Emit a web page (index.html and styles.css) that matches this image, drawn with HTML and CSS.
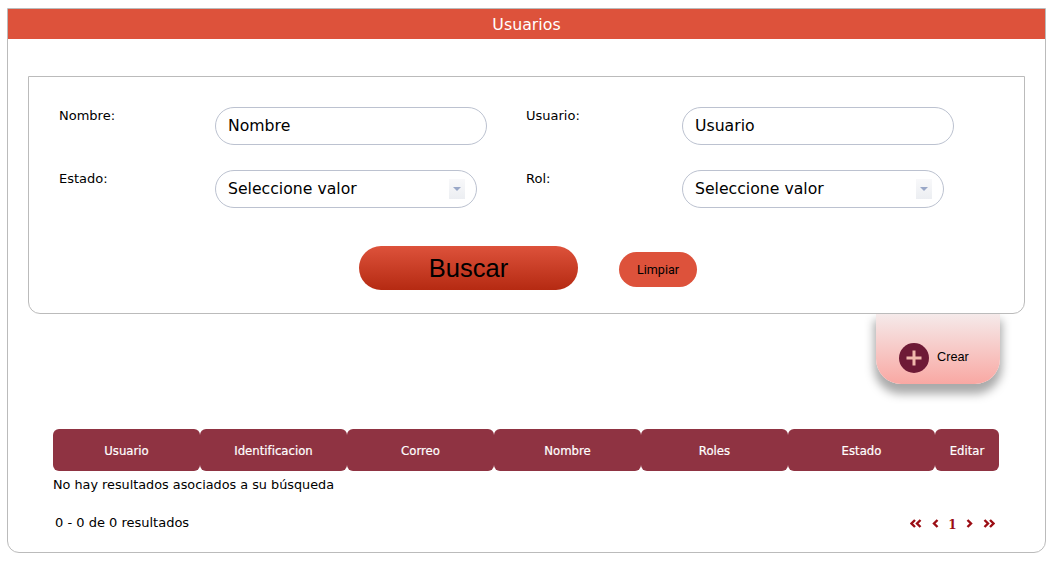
FILE: index.html
```html
<!DOCTYPE html>
<html lang="es">
<head>
<meta charset="utf-8">
<title>Usuarios</title>
<link rel="stylesheet" href="styles.css">
</head>
<body>
<main class="card">
  <h1 class="title">Usuarios</h1>
  <form class="panel">
    <div class="fields">
      <label class="label">Nombre:</label>
      <div class="control"><div class="input">Nombre</div></div>
      <label class="label">Usuario:</label>
      <div class="control"><div class="input">Usuario</div></div>
      <label class="label">Estado:</label>
      <div class="control"><div class="input select">Seleccione valor<span class="arrow"></span></div></div>
      <label class="label">Rol:</label>
      <div class="control"><div class="input select">Seleccione valor<span class="arrow"></span></div></div>
    </div>
    <div class="actions">
      <button type="button" class="btn-search">Buscar</button>
      <button type="button" class="btn-clear">Limpiar</button>
    </div>
  </form>
  <div class="create-row">
    <div class="create">
      <span class="plus"><svg viewBox="0 0 30 30" width="30" height="30"><path d="M15 7.5v15M7.5 15h15" stroke="#f0b8ac" stroke-width="3" fill="none"/></svg></span>
      <span class="create-text">Crear</span>
    </div>
  </div>
  <div class="table-head">
    <div class="th">Usuario</div>
    <div class="th">Identificacion</div>
    <div class="th">Correo</div>
    <div class="th">Nombre</div>
    <div class="th">Roles</div>
    <div class="th">Estado</div>
    <div class="th">Editar</div>
  </div>
  <p class="empty">No hay resultados asociados a su búsqueda</p>
  <div class="pager-row">
    <span class="count">0 - 0 de 0 resultados</span>
    <nav class="pager">
      <svg class="chev" width="12" height="9" viewBox="0 0 12 9"><path d="M5 1 1.5 4.5 5 8M10.500 1 7 4.500 10.500 8"/></svg>
      <svg class="chev" width="7" height="9" viewBox="0 0 7 9"><path d="M5.500 1 2 4.500 5.500 8"/></svg>
      <span class="page">1</span>
      <svg class="chev" width="7" height="9" viewBox="0 0 7 9"><path d="M1.500 1 5 4.500 1.500 8"/></svg>
      <svg class="chev" width="12" height="9" viewBox="0 0 12 9"><path d="M1.500 1 5 4.500 1.500 8M7 1 10.500 4.500 7 8"/></svg>
    </nav>
  </div>
</main>
</body>
</html>
```

FILE: styles.css
```css
* { box-sizing: border-box; }
html, body { height: 100%; }
body {
  margin: 0;
  padding: 8px 7px 8px 7px;
  background: #fff;
  color: #000;
  font-family: "DejaVu Sans", Verdana, sans-serif;
  overflow: hidden;
}
.card {
  height: 545px;
  border: 1px solid #bbb;
  border-radius: 0 0 12px 12px;
  padding-bottom: 12px;
}
.title {
  margin: 0;
  height: 30px;
  background: #dd523b;
  color: #fff;
  font-size: 15.8px;
  font-weight: 400;
  line-height: 32px;
  text-align: center;
}
.panel {
  position: relative;
  z-index: 1;
  margin: 37px 20px 0;
  height: 238px;
  border: 1px solid #bbb;
  border-radius: 0 0 12px 12px;
  background: #fff;
  padding: 30px 30px 0;
}
.fields {
  display: grid;
  grid-template-columns: 156px 311px 156px 311px;
  grid-auto-rows: 38px;
  row-gap: 25px;
}
.label {
  font-size: 13px;
  line-height: 16px;
  padding-top: 1px;
}
.input {
  width: 272px;
  height: 38px;
  border: 1px solid #bcc2d0;
  border-radius: 19px;
  padding-left: 12px;
  font-size: 15.7px;
  line-height: 35px;
  background: #fff;
}
.select {
  display: flex;
  justify-content: space-between;
  align-items: center;
  width: 262px;
  padding-right: 11px;
  padding-bottom: 2px;
}
.arrow {
  position: relative;
  top: 1px;
  width: 16px;
  height: 20px;
  background: linear-gradient(#f8f8fa, #eceef2);
}
.arrow::after {
  content: "";
  position: absolute;
  left: 4px;
  top: 8px;
  border-left: 4px solid transparent;
  border-right: 4px solid transparent;
  border-top: 4px solid #9aa8c8;
}
.actions {
  display: flex;
  align-items: center;
  justify-content: flex-start;
  gap: 41px;
  margin-top: 38px;
  padding-left: 300px;
}
.btn-search {
  width: 219px;
  height: 44px;
  border: 0;
  border-radius: 22px;
  background: linear-gradient(#dd523b, #b52a12);
  color: #000;
  font-family: "Liberation Sans", Arial, sans-serif;
  font-size: 25.5px;
}
.btn-clear {
  width: 78px;
  height: 35px;
  margin-top: 2px;
  border: 0;
  border-radius: 18px;
  background: #dd523b;
  color: #000;
  font-family: "Roboto", "Liberation Sans", sans-serif;
  font-size: 12.6px;
  padding: 0;
}
.create-row {
  display: flex;
  justify-content: flex-end;
  padding-right: 45px;
}
.create {
  display: flex;
  align-items: center;
  gap: 8px;
  width: 124px;
  height: 70px;
  padding: 28px 0 11px 23px;
  border-radius: 0 0 25px 25px;
  background: linear-gradient(#f5eaea, #f9a8a3);
  box-shadow: 0 8px 10px 2px #aaa;
}
.plus {
  display: block;
  width: 30px;
  height: 30px;
  border-radius: 50%;
  background: #6e1a36;
}
.plus svg { display: block; }
.create-text {
  font-family: "Liberation Sans", Arial, sans-serif;
  font-size: 12.7px;
  position: relative;
  top: -1px;
}
.table-head {
  display: grid;
  grid-template-columns: repeat(6, 147px) 64px;
  margin: 45px 46px 0 45px;
}
.th {
  height: 42px;
  border-radius: 6px;
  background: #8f3342;
  color: #fff;
  font-size: 11.7px;
  font-weight: 400;
  line-height: 44px;
  text-align: center;
  -webkit-text-stroke: 0.2px #fff;
}
.empty {
  margin: 6px 0 0 45px;
  font-size: 12.8px;
  line-height: 16px;
}
.pager-row {
  display: flex;
  justify-content: space-between;
  align-items: center;
  margin: 21px 50px 0 47px;
  height: 16px;
}
.count { font-size: 13px; }
.pager {
  display: flex;
  align-items: center;
  gap: 9.7px;
  margin-top: 2px;
}
.chev path {
  fill: none;
  stroke: #9b0d14;
  stroke-width: 2.4;
}
.page {
  color: #9b0d14;
  font-family: "DejaVu Serif", serif;
  font-size: 12px;
  font-weight: 700;
  line-height: 16px;
  margin-top: 4px;
}
```
